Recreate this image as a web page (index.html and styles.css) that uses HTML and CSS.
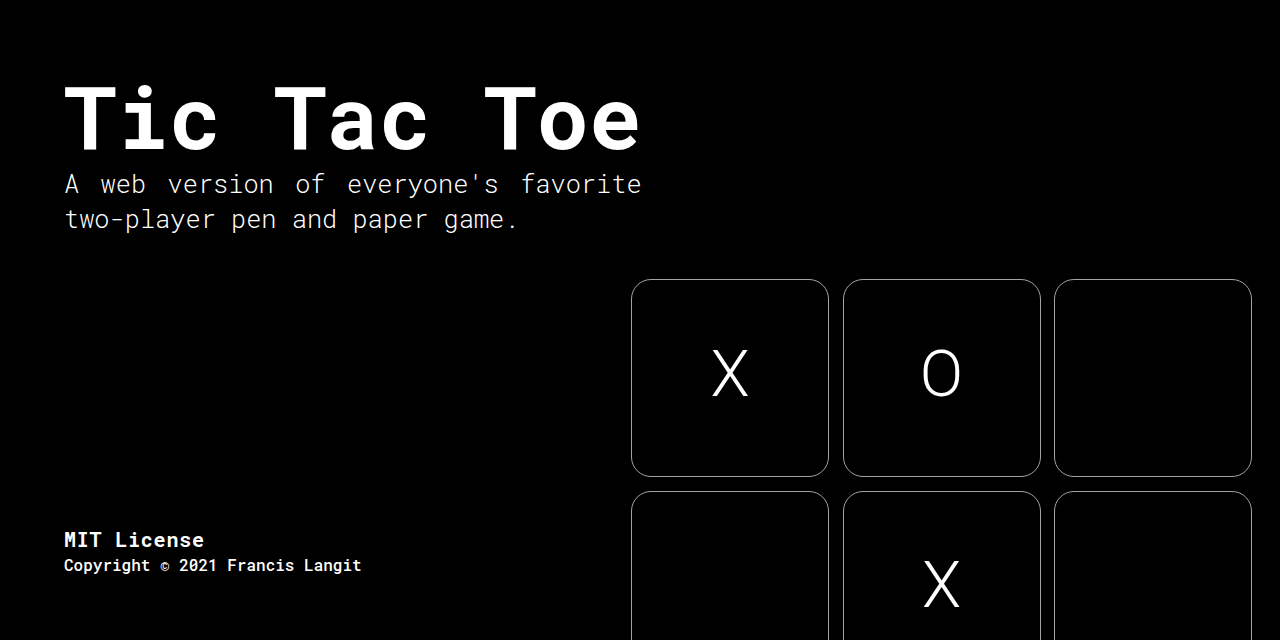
FILE: index.html
```html
<!DOCTYPE html>
<html lang="en">
<head>
<meta charset="utf-8">
<title>Tic Tac Toe</title>
<link rel="stylesheet" href="styles.css">
</head>
<body>
<main class="page">
  <header class="header">
    <h1 class="title">Tic Tac Toe</h1>
    <p class="subtitle">A web version of everyone's favorite two-player pen and paper game.</p>
  </header>
  <section class="board">
    <button class="cell">X</button>
    <button class="cell">O</button>
    <button class="cell"></button>
    <button class="cell"></button>
    <button class="cell">X</button>
    <button class="cell"></button>
    <button class="cell"></button>
    <button class="cell"></button>
    <button class="cell"></button>
  </section>
  <footer class="footer">
    <p class="license">MIT License</p>
    <p class="copyright">Copyright © 2021 Francis Langit</p>
  </footer>
</main>
</body>
</html>
```
FILE: styles.css
```css
* { box-sizing: border-box; }
html, body {
  margin: 0;
  padding: 0;
  background: #000;
  color: #fff;
  height: 640px;
  overflow: hidden;
}
.page {
  height: 640px;
  display: grid;
  grid-template-columns: 1fr 621px;
  grid-template-rows: auto minmax(0, 1fr);
  padding: 71px 28px 65px 64px;
  font-family: "Roboto Mono", "DejaVu Sans Mono", monospace;
}
.header {
  grid-column: 1 / -1;
  grid-row: 1;
  width: fit-content;
}
.title {
  margin: 0;
  font-size: 87.5px;
  line-height: 88px;
  font-weight: 700;
  white-space: nowrap;
}
.subtitle {
  width: 0;
  min-width: 100%;
  margin: 7px 0 0;
  font-size: 25.3px;
  line-height: 35px;
  font-weight: 300;
  text-align: justify;
  color: #fff;
}
.board {
  grid-column: 2;
  grid-row: 2;
  margin-top: 43px;
  display: grid;
  grid-template-columns: repeat(3, 198px);
  grid-auto-rows: 198px;
  gap: 13.5px;
  align-self: start;
}
.cell {
  background: #000;
  border: 1px solid #a3a3a3;
  border-radius: 20px;
  color: #fff;
  font-family: Roboto, "Liberation Sans", sans-serif;
  font-weight: 300;
  font-size: 64px;
  display: flex;
  align-items: center;
  justify-content: center;
  padding: 0 0 8px;
  margin: 0;
}
.footer {
  grid-column: 1;
  grid-row: 2;
  align-self: end;
}
.license {
  margin: 0;
  font-size: 20px;
  line-height: 24px;
  font-weight: 700;
  letter-spacing: 0.8px;
}
.copyright {
  margin: 4px 0 0;
  font-size: 16px;
  line-height: 20px;
  font-weight: 500;
}
```
